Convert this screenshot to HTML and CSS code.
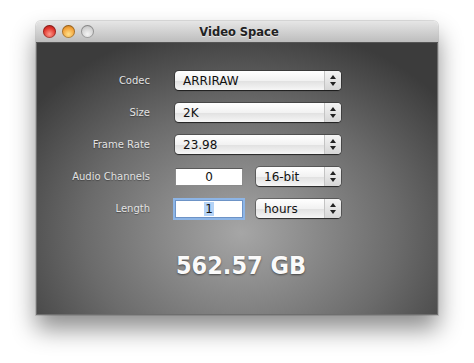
FILE: index.html
```html
<!DOCTYPE html>
<html lang="en">
<head>
  <meta charset="UTF-8" />
  <title>Video Space</title>
  <link rel="stylesheet" href="styles.css">
</head>
<body>
  <div class="window">
    <div class="titlebar">
      <div class="lights">
        <span class="light red"></span>
        <span class="light orange"></span>
        <span class="light off"></span>
      </div>
      <div class="title">Video Space</div>
    </div>
    <div class="content">
      <div class="form">
        <label>Codec</label>
        <div class="popup wide"><span>ARRIRAW</span><i class="arrows"></i></div>

        <label>Size</label>
        <div class="popup wide"><span>2K</span><i class="arrows"></i></div>

        <label>Frame Rate</label>
        <div class="popup wide"><span>23.98</span><i class="arrows"></i></div>

        <label>Audio Channels</label>
        <div class="pair">
          <div class="field">0</div>
          <div class="popup small"><span>16-bit</span><i class="arrows"></i></div>
        </div>

        <label>Length</label>
        <div class="pair">
          <div class="field focus"><span class="sel">1</span></div>
          <div class="popup small"><span>hours</span><i class="arrows"></i></div>
        </div>
      </div>
      <div class="total">562.57 GB</div>
    </div>
  </div>
</body>
</html>
```

FILE: styles.css
```css
body {
  margin: 0;
  background: #fff;
  font-family: "DejaVu Sans", "Liberation Sans", sans-serif;
  height: 363px;
  overflow: hidden;
}
.window {
  width: 402px;
  margin: 21px 0 0 36px;
  border-radius: 5px 5px 0 0;
  box-shadow: 0 14px 24px rgba(0,0,0,0.45), 0 0 0 1px rgba(0,0,0,0.12);
}
.titlebar {
  height: 21px;
  position: relative;
  border-radius: 5px 5px 0 0;
  background: linear-gradient(#e6e6e6, #bdbdbd);
  border-bottom: 1px solid #555;
  display: flex;
  align-items: center;
  justify-content: center;
}
.lights {
  position: absolute;
  left: 7px;
  top: 4px;
  display: flex;
  gap: 6px;
}
.light {
  width: 13px;
  height: 13px;
  border-radius: 50%;
  box-shadow: inset 0 0 0 1px rgba(0,0,0,0.3);
}
.light.red { background: radial-gradient(circle at 50% 70%, #ff9a8c, #e0342c 55%, #9c1510); }
.light.orange { background: radial-gradient(circle at 50% 70%, #ffe08a, #f3a33a 55%, #b26a10); }
.light.off { background: radial-gradient(circle at 50% 70%, #f4f4f4, #cfcfcf 60%, #a8a8a8); }
.title {
  font-size: 11.5px;
  font-weight: bold;
  color: #222;
  text-shadow: 0 1px 0 rgba(255,255,255,0.6);
  padding: 1px 0 0 4px;
}
.content {
  height: 272px;
  box-sizing: border-box;
  padding-top: 28px;
  background: radial-gradient(ellipse 260px 210px at 51% 70%, #a6a6a6, #6b6b6b 60%, #3c3c3c 100%);
  border: 1px solid #6e6e6e;
  border-top: none;
}
.form {
  display: grid;
  grid-template-columns: 113px 166px;
  column-gap: 25px;
  row-gap: 13px;
  align-items: center;
}
.form label {
  text-align: right;
  font-size: 10px;
  color: #e2e2e2;
  text-shadow: 0 1px 1px rgba(0,0,0,0.35);
}
.popup {
  height: 19px;
  box-sizing: border-box;
  display: flex;
  align-items: center;
  border-radius: 4px;
  background: linear-gradient(#ffffff, #f2f2f2 50%, #e0e0e0 51%, #f6f6f6);
  box-shadow: 0 1px 1px rgba(0,0,0,0.55), 0 0 0 1px rgba(0,0,0,0.3);
  font-size: 12px;
  color: #111;
}
.popup span {
  flex: 1;
  padding-left: 8px;
}
.arrows {
  width: 16px;
  height: 100%;
  border-left: 1px solid #c4c4c4;
  background: linear-gradient(#f4f4f4, #d6d6d6);
  border-radius: 0 4px 4px 0;
  position: relative;
}
.arrows::before, .arrows::after {
  content: "";
  position: absolute;
  left: 5px;
  border-left: 3px solid transparent;
  border-right: 3px solid transparent;
}
.arrows::before { top: 4px; border-bottom: 4px solid #222; }
.arrows::after { bottom: 4px; border-top: 4px solid #222; }
.pair {
  display: flex;
  align-items: center;
  gap: 13px;
}
.field {
  width: 68px;
  height: 18px;
  box-sizing: border-box;
  background: #fff;
  border: 1px solid #8a8a8a;
  border-top-color: #5a5a5a;
  text-align: center;
  font-size: 12px;
  line-height: 16px;
  color: #111;
}
.field.focus {
  box-shadow: 0 0 0 2px #8db5e6;
  border-color: #6d93c6;
}
.sel { background: #b5d3f6; padding: 0 1px; }
.popup.small { width: 85px; }
.total {
  margin-top: 33px;
  text-align: center;
  padding-left: 8px;
  font-family: "DejaVu Sans Condensed", "DejaVu Sans", sans-serif;
  font-size: 25px;
  font-weight: bold;
  color: #fafafa;
  text-shadow: 0 1px 2px rgba(0,0,0,0.5);
}
```
